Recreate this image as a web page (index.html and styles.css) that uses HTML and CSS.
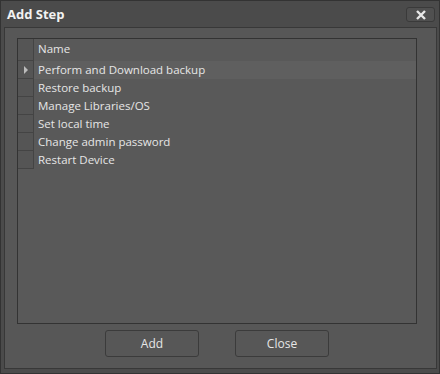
FILE: index.html
```html
<!DOCTYPE html>
<html lang="en">
<head>
    <meta charset="UTF-8">
    <title>Add Step</title>
    <link rel="stylesheet" href="styles.css">
</head>
<body>
    <div class="dialog">
        <div class="titlebar">
            <span class="title">Add Step</span>
            <button class="close-x">
                <svg width="12" height="10" viewBox="0 0 12 10">
                    <path d="M2 1 L10 9 M10 1 L2 9" stroke="#e8e8e8" stroke-width="2.4"/>
                </svg>
            </button>
        </div>
        <div class="panel">
            <div class="grid">
                <div class="row header">
                    <div class="indicator"></div>
                    <div class="cell">Name</div>
                </div>
                <div class="row selected">
                    <div class="indicator"><span class="arrow"></span></div>
                    <div class="cell">Perform and Download backup</div>
                </div>
                <div class="row">
                    <div class="indicator"></div>
                    <div class="cell">Restore backup</div>
                </div>
                <div class="row">
                    <div class="indicator"></div>
                    <div class="cell">Manage Libraries/OS</div>
                </div>
                <div class="row">
                    <div class="indicator"></div>
                    <div class="cell">Set local time</div>
                </div>
                <div class="row">
                    <div class="indicator"></div>
                    <div class="cell">Change admin password</div>
                </div>
                <div class="row">
                    <div class="indicator"></div>
                    <div class="cell">Restart Device</div>
                </div>
            </div>
            <div class="buttons">
                <button class="btn">Add</button>
                <button class="btn">Close</button>
            </div>
        </div>
    </div>
</body>
</html>
```

FILE: styles.css
```css
body {
    margin: 0;
    background-color: #4a4a4a;
    font-family: "Open Sans", "Noto Sans", sans-serif;
    font-size: 11.5px;
    color: #e6e6e6;
}
.dialog {
    width: 440px;
    height: 374px;
    box-sizing: border-box;
    border: 1px solid #333;
    background-color: #4b4b4b;
    display: flex;
    flex-direction: column;
}
.titlebar {
    height: 25px;
    display: flex;
    align-items: center;
    justify-content: space-between;
    padding: 0 4px 0 6px;
}
.title {
    font-weight: bold;
    font-size: 13px;
    color: #f2f2f2;
}
.close-x {
    width: 29px;
    height: 15px;
    margin-top: 2px;
    border: 1px solid #3a3a3a;
    border-radius: 3px;
    background-color: #505050;
    display: flex;
    align-items: center;
    justify-content: center;
    padding: 0;
}
.panel {
    margin: 1px 2px 4px 3px;
    flex: 1;
    border: 1px solid #383838;
    background-color: #575757;
    padding: 10px 19px 11px 12px;
    display: flex;
    flex-direction: column;
}
.grid {
    flex: 1;
    border: 1px solid #333;
    background-color: #595959;
}
.row {
    display: flex;
    height: 18px;
}
.row.header {
    height: 22px;
}
.row.selected {
    background-color: #5f5f5f;
}
.indicator {
    width: 15px;
    border-right: 1px solid #444;
    border-bottom: 1px solid #444;
    background-color: #555;
    display: flex;
    align-items: center;
    justify-content: center;
}
.arrow {
    width: 0;
    height: 0;
    border-left: 4px solid #bbb;
    border-top: 4px solid transparent;
    border-bottom: 4px solid transparent;
}
.cell {
    padding-left: 4px;
    line-height: 18px;
}
.row.header .cell {
    line-height: 20px;
}
.buttons {
    display: flex;
    justify-content: center;
    gap: 36px;
    padding-top: 6px;
}
.btn {
    width: 94px;
    height: 27px;
    border: 1px solid #3b3b3b;
    border-radius: 3px;
    background-color: #575757;
    color: #e6e6e6;
    font-family: "Open Sans", "Noto Sans", sans-serif;
    font-size: 12px;
}
```
